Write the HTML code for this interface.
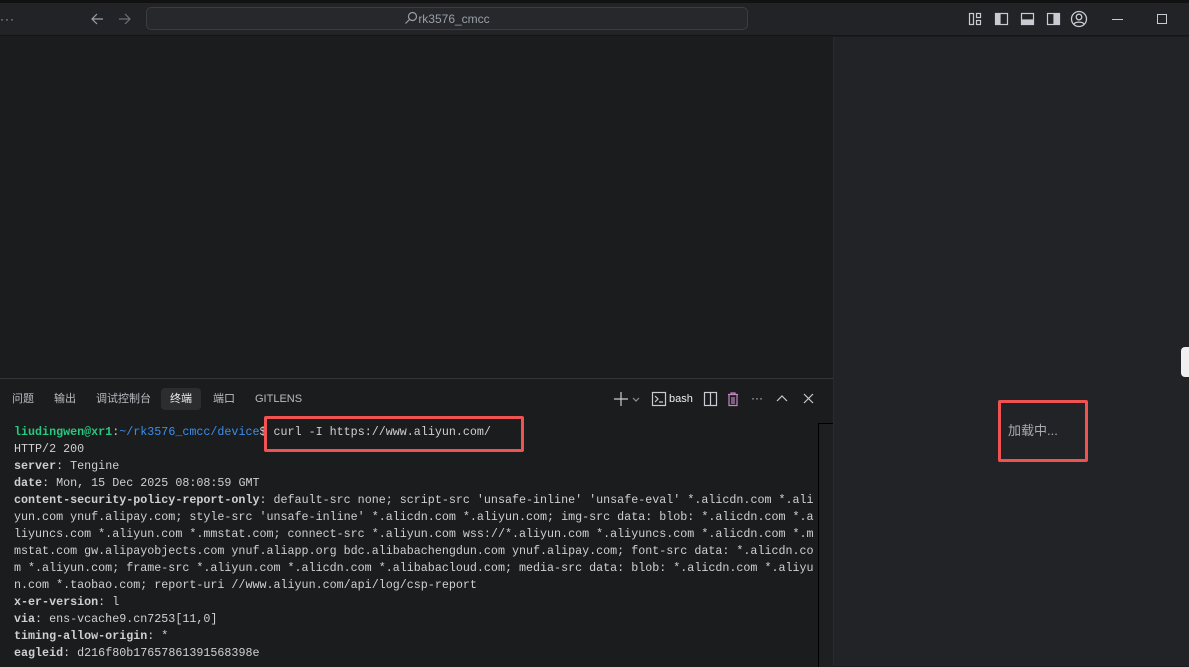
<!DOCTYPE html>
<html><head><meta charset="utf-8"><style>
*{margin:0;padding:0;box-sizing:border-box}
body{width:1189px;height:666px;overflow:hidden;background:#1b1c1e;font-family:"Liberation Sans","Noto Sans CJK SC",sans-serif;position:relative}
.top{position:absolute;left:0;top:0;width:1189px;height:36px;background:#222326;border-bottom:1px solid #141517}
.topline{position:absolute;left:0;top:0;width:1189px;height:3px;background:#111}
.search{position:absolute;left:146px;top:7px;width:602px;height:23px;border:1px solid #3a3d42;border-radius:5px;background:#26282b;color:#9aa0a8;font-size:12px;text-align:center;line-height:22px}
.right{position:absolute;left:833px;top:37px;width:356px;height:629px;background:#222326;border-left:1px solid #2a2b2e}
.panel{position:absolute;left:0;top:378px;width:833px;height:288px;border-top:1px solid #34363a;background:#1b1c1e}
.tabs{position:absolute;top:10px;left:0;font-size:11px;color:#b8bcc2}
.tabs span{position:absolute;top:0;white-space:nowrap;line-height:20px}
.term{position:absolute;left:14px;top:45px;font-family:"Liberation Mono",monospace;font-size:11.7px;line-height:17px;color:#d0d0d0;white-space:pre}
.term b{font-weight:bold}
.g{color:#27c97e;font-weight:bold}.bl{color:#3b8eea}
.red{position:absolute;border:3px solid #f05252;border-radius:2px}
svg{position:absolute}
</style></head><body>
<div class="top"><div class="topline"></div>
<div style="position:absolute;left:0;top:12px;color:#aaa;font-size:12px;letter-spacing:1px">···</div>
<svg style="left:90px;top:12px" width="44" height="14" viewBox="0 0 44 14" fill="none" stroke="#9aa3ad" stroke-width="1.2"><path d="M13 7H2M7 2L2 7l5 5"/><path d="M29 7h11M35 2l5 5-5 5" stroke="#6a7079"/></svg>
<div class="search"><svg style="position:relative;display:inline-block;vertical-align:-2px" width="14" height="14" viewBox="0 0 14 14" fill="none" stroke="#9aa0a8" stroke-width="1.2"><circle cx="8.5" cy="5.5" r="4"/><path d="M5.5 8.5L1.5 12.5"/></svg>rk3576_cmcc</div>
<svg style="left:968px;top:11px" width="100" height="16" viewBox="0 0 100 16" fill="none" stroke="#c8ccd2" stroke-width="1.2"><rect x="1.5" y="2.5" width="4" height="11"/><rect x="8.5" y="2.5" width="4" height="4"/><rect x="8.5" y="9.5" width="4" height="4"/><rect x="27.5" y="2.5" width="12" height="11"/><rect x="28" y="3" width="4" height="10" fill="#c8ccd2"/><rect x="53.5" y="2.5" width="12" height="11"/><rect x="54" y="9" width="11" height="4" fill="#c8ccd2"/><rect x="79.5" y="2.5" width="12" height="11"/><rect x="86" y="3" width="5" height="10" fill="#c8ccd2"/></svg>
<svg style="left:1070px;top:10px" width="18" height="18" viewBox="0 0 18 18" fill="none" stroke="#c8ccd2" stroke-width="1.3"><circle cx="9" cy="9" r="7.5"/><circle cx="9" cy="7" r="2.8"/><path d="M4 14c1.5-2.5 8.5-2.5 10 0"/></svg>
<div style="position:absolute;left:1112px;top:19px;width:11px;height:1px;background:#c8ccd2"></div>
<div style="position:absolute;left:1157px;top:14px;width:10px;height:10px;border:1px solid #c8ccd2"></div>
</div>
<div class="right"></div>
<div style="position:absolute;left:1181px;top:347px;width:8px;height:30px;background:#f0f0f0;border-radius:4px 0 0 4px"></div>
<div style="position:absolute;left:1008px;top:420px;color:#a8acb2;font-size:13px">加载中...</div>
<div class="red" style="left:998px;top:400px;width:90px;height:62px"></div>
<div class="panel">
<div class="tabs">
<span style="left:12px">问题</span><span style="left:54px">输出</span><span style="left:96px">调试控制台</span>
<span style="left:161px;top:-1px;background:#2c2d30;border-radius:4px;padding:0 9px;color:#eee;line-height:22px">终端</span>
<span style="left:213px">端口</span><span style="left:255px">GITLENS</span>
</div>
<svg style="left:614px;top:12px" width="210" height="16" viewBox="0 0 210 16" fill="none" stroke="#c8ccd2" stroke-width="1.2"><path d="M7 1v14M0 8h14"/><path d="M19 7l3 3 3-3" stroke="#8a9099"/><rect x="38.5" y="1.5" width="13" height="13"/><path d="M41 5l3 3-3 3M45 11h4"/><rect x="90.5" y="1.5" width="12" height="13"/><path d="M96.5 1.5v13"/><path d="M114 3.5h10M117 3.5V2h4v1.5M115 4v10.5h8V4" stroke="#c586c0"/><path d="M118 6v7M120 6v7" stroke="#c586c0"/><path d="M163 10l5-5 5 5M190 3l9 9M199 3l-9 9"/></svg>
<div style="position:absolute;left:669px;top:14px;color:#eee;font-size:11px">bash</div>
<div style="position:absolute;left:751px;top:12px;color:#c8ccd2;font-size:12px">···</div>
<div style="position:absolute;left:818px;top:44px;width:15px;height:244px;border-left:1px solid #000;border-top:1px solid #000;background:#1e1f21"></div>
<div class="term"><span class="g">liudingwen@xr1</span>:<span class="bl">~/rk3576_cmcc/device</span>$ curl -I https://www.aliyun.com/
HTTP/2 200
<b>server</b>: Tengine
<b>date</b>: Mon, 15 Dec 2025 08:08:59 GMT
<b>content-security-policy-report-only</b>: default-src none; script-src 'unsafe-inline' 'unsafe-eval' *.alicdn.com *.ali
yun.com ynuf.alipay.com; style-src 'unsafe-inline' *.alicdn.com *.aliyun.com; img-src data: blob: *.alicdn.com *.a
liyuncs.com *.aliyun.com *.mmstat.com; connect-src *.aliyun.com wss://*.aliyun.com *.aliyuncs.com *.alicdn.com *.m
mstat.com gw.alipayobjects.com ynuf.aliapp.org bdc.alibabachengdun.com ynuf.alipay.com; font-src data: *.alicdn.co
m *.aliyun.com; frame-src *.aliyun.com *.alicdn.com *.alibabacloud.com; media-src data: blob: *.alicdn.com *.aliyu
n.com *.taobao.com; report-uri //www.aliyun.com/api/log/csp-report
<b>x-er-version</b>: l
<b>via</b>: ens-vcache9.cn7253[11,0]
<b>timing-allow-origin</b>: *
<b>eagleid</b>: d216f80b17657861391568398e</div>
<div class="red" style="left:264px;top:37px;width:260px;height:36px"></div>
</div>
</body></html>
